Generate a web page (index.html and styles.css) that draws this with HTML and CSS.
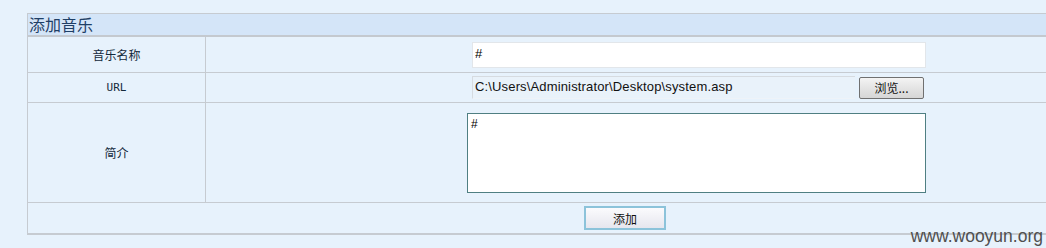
FILE: index.html
```html
<!DOCTYPE html>
<html lang="zh-CN">
<head>
  <meta charset="UTF-8" />
  <title>添加音乐</title>
  <link rel="stylesheet" href="styles.css">
</head>
<body>
  <div class="panel">
    <div class="panel-title">添加音乐</div>
    <form class="music-form" onsubmit="return false">
      <div class="row row-name">
        <div class="label">音乐名称</div>
        <div class="field">
          <input type="text" class="text-input" value="#">
        </div>
      </div>
      <div class="row row-url">
        <div class="label mono">URL</div>
        <div class="field">
          <div class="file-box">
            <span class="file-path">C:\Users\Administrator\Desktop\system.asp</span>
            <button type="button" class="btn browse">浏览...</button>
          </div>
        </div>
      </div>
      <div class="row row-intro">
        <div class="label">简介</div>
        <div class="field">
          <textarea class="intro">#</textarea>
        </div>
      </div>
      <div class="row row-submit">
        <button type="submit" class="btn submit">添加</button>
      </div>
    </form>
  </div>
  <div class="watermark">www.wooyun.org</div>
</body>
</html>
```

FILE: styles.css
```css
html, body {
  margin: 0;
  height: 100%;
  overflow: hidden;
}
body {
  background-color: #e7f2fc;
  font-family: "Noto Sans CJK SC", "Liberation Sans", sans-serif;
  font-size: 12px;
  color: #1b2b3a;
  padding: 13px 0 0 27px;
  box-sizing: border-box;
}
.panel {
  border: 1px solid #c6cbd1;
  border-right: none;
}
.panel-title {
  height: 21px;
  line-height: 21px;
  background-color: #d4e5f8;
  border-bottom: 2px solid #c4c9cf;
  font-size: 16px;
  color: #1f3f66;
  padding-left: 1px;
}
.row {
  display: grid;
  grid-template-columns: 178px 1fr;
  border-bottom: 1px solid #c6cbd1;
}
.row-name { height: 35px; }
.row-url { height: 29px; }
.row-intro { height: 99px; }
.row-submit {
  display: flex;
  height: 30px;
  align-items: center;
  padding-left: 556px;
}
.label {
  display: flex;
  align-items: center;
  justify-content: center;
  border-right: 1px solid #c6cbd1;
  color: #13293b;
}
.label.mono {
  font-family: "DejaVu Sans Mono", "Liberation Mono", monospace;
  font-size: 11px;
}
.field {
  display: flex;
  align-items: center;
  padding-left: 266px;
}
.text-input {
  width: 454px;
  height: 26px;
  box-sizing: border-box;
  border: 1px solid #e2e6ea;
  background: #fff;
  font-family: "Liberation Sans", sans-serif;
  font-size: 13px;
  padding: 0 2px 3px;
  outline: none;
}
.file-box {
  display: flex;
  align-items: center;
  width: 452px;
  gap: 4px;
}
.file-path {
  flex: 1;
  height: 23px;
  line-height: 19px;
  box-sizing: border-box;
  border: 1px solid #d6dbe0;
  border-right: none;
  border-bottom-color: #eef3f8;
  background: #e9f2fa;
  font-family: "Liberation Sans", sans-serif;
  font-size: 13px;
  letter-spacing: 0.15px;
  color: #111;
  padding-left: 2px;
}
.btn {
  font-family: "Noto Sans CJK SC", sans-serif;
  font-size: 12px;
  color: #111;
  cursor: pointer;
  padding: 0;
}
.browse {
  width: 65px;
  height: 22px;
  border: 1px solid #707070;
  border-radius: 2px;
  background: linear-gradient(#f4f4f4, #e4e4e4 50%, #d6d6d6);
}
.intro {
  margin-left: -5px;
  width: 459px;
  height: 80px;
  box-sizing: border-box;
  border: 1px solid #4f7f82;
  background: #fff;
  font-family: "Liberation Sans", sans-serif;
  font-size: 12px;
  padding: 3px 3px;
  resize: none;
  outline: none;
}
.submit {
  width: 82px;
  height: 24px;
  border: 2px solid #8cc3da;
  background: linear-gradient(#fbfbfd, #e6e6ee);
}
.watermark {
  position: absolute;
  right: 3px;
  bottom: 1px;
  font-family: "Liberation Sans", sans-serif;
  font-size: 17.5px;
  color: #4f4f4f;
}
```
